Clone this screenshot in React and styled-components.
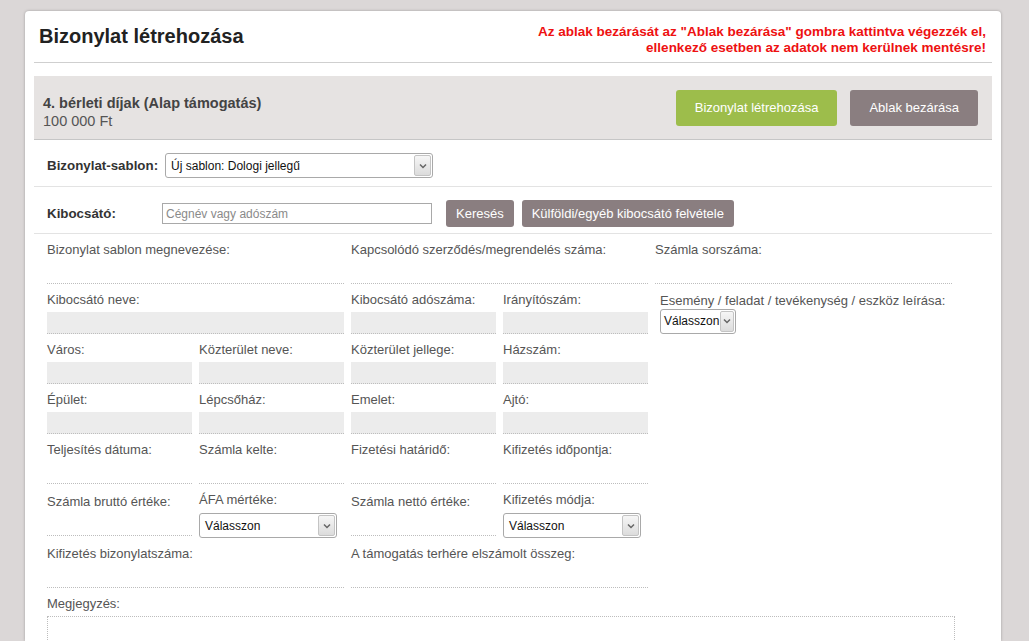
import React from 'react';
import styled, { createGlobalStyle } from 'styled-components';

const GlobalStyle = createGlobalStyle`
  html, body {
    margin: 0;
    padding: 0;
    height: 641px;
    overflow: hidden;
    background: #dbd7d7;
    font-family: "Liberation Sans", Arial, sans-serif;
  }
`;

const Modal = styled.div`
  margin: 11px 0 0 25px;
  width: 976px;
  height: 630px;
  box-sizing: border-box;
  padding: 0 9px;
  background: #fff;
  border-radius: 4px 4px 0 0;
  box-shadow: 0 0 3px rgba(0, 0, 0, 0.28);
  overflow: hidden;
`;

const Header = styled.div`
  display: flex;
  justify-content: space-between;
  align-items: flex-start;
  padding: 13px 6px 6px 5px;
  border-bottom: 1px solid #cfcfcf;
`;

const Title = styled.h1`
  margin: 0;
  font-size: 20px;
  line-height: 24px;
  font-weight: bold;
  color: #222;
`;

const Warning = styled.div`
  text-align: right;
  font-size: 13.5px;
  line-height: 16px;
  font-weight: bold;
  color: #ee1111;
`;

const Band = styled.div`
  box-sizing: border-box;
  height: 64px;
  margin-top: 13px;
  display: flex;
  justify-content: space-between;
  align-items: center;
  padding: 0 14px 0 9px;
  background: #e6e3e2;
  border-bottom: 1px solid #c6c6c6;
`;

const Info = styled.div`
  margin-top: 9px;
  font-size: 14.5px;
  line-height: 18px;
`;

const InfoName = styled.div`
  font-weight: bold;
  color: #444;
`;

const InfoAmount = styled.div`
  color: #555;
`;

const Actions = styled.div`
  display: flex;
  gap: 13px;
`;

const Button = styled.button`
  height: ${p => (p.$small ? 27 : 36)}px;
  padding: 0 ${p => (p.$small ? 10 : 19)}px;
  margin-left: ${p => p.$ml || 0}px;
  border: none;
  border-radius: 3px;
  background: ${p => (p.$green ? '#9dbd4b' : '#8a7e80')};
  color: #fff;
  font-family: "Liberation Sans", Arial, sans-serif;
  font-size: 13px;
  cursor: pointer;
  white-space: nowrap;
`;

const Row = styled.div`
  display: flex;
  align-items: center;
  padding: 13px 13px ${p => p.$pb}px;
  border-bottom: 1px solid #e3e3e3;
`;

const RowLabel = styled.div`
  width: ${p => (p.$w ? `${p.$w}px` : 'auto')};
  margin-right: ${p => (p.$w ? 0 : 7)}px;
  font-size: 13.33px;
  font-weight: bold;
  color: #333;
`;

const TextInput = styled.input`
  box-sizing: border-box;
  width: 270px;
  height: 21px;
  padding: 0 3px;
  border: 1px solid #a9a9a9;
  font-family: "Liberation Sans", Arial, sans-serif;
  font-size: 12px;
  color: #333;
  outline: none;
  &::placeholder {
    color: #8a8a8a;
  }
`;

const SelectBox = styled.div`
  box-sizing: border-box;
  display: flex;
  align-items: center;
  width: ${p => p.$w}px;
  height: 25px;
  border: 1px solid #a9a9a9;
  border-radius: 3px;
  background: #fff;
  overflow: hidden;
`;

const SelectText = styled.span`
  flex: 1;
  padding-left: ${p => p.$pl || 5}px;
  font-size: 12px;
  color: #111;
  white-space: nowrap;
`;

const ArrowBox = styled.span`
  box-sizing: border-box;
  display: flex;
  align-items: center;
  justify-content: center;
  width: 17px;
  height: calc(100% - 2px);
  margin: 1px;
  border: 1px solid #c4c4c4;
  border-radius: 2px;
  background: linear-gradient(#f6f6f6, #dcdcdc);
`;

const FormGrid = styled.div`
  display: grid;
  grid-template-columns: repeat(6, 145px);
  column-gap: 7px;
  row-gap: 7px;
  align-items: center;
  padding: 7px 13px 0;
`;

const Field = styled.div`
  grid-column: span ${p => p.$span || 1};
  padding-left: ${p => p.$indent || 0}px;
`;

const Label = styled.div`
  font-size: 13px;
  line-height: 17px;
  color: #555;
  margin-bottom: ${p => (p.$mb === undefined ? 4 : p.$mb)}px;
  white-space: nowrap;
`;

const Value = styled.div`
  height: 21px;
  background: ${p => (p.$filled ? '#ececec' : 'transparent')};
  border-bottom: 1px dotted #bdbdbd;
`;

const Notes = styled.div`
  width: 906px;
  height: 60px;
  border: 1px dotted #bdbdbd;
`;

const Chevron = () => (
  <svg width="8" height="6" viewBox="0 0 8 6">
    <path d="M1 1.5 L4 4.5 L7 1.5" fill="none" stroke="#666" strokeWidth="1.5" />
  </svg>
);

const Select = ({ value, width, pl }) => (
  <SelectBox $w={width}>
    <SelectText $pl={pl}>{value}</SelectText>
    <ArrowBox>
      <Chevron />
    </ArrowBox>
  </SelectBox>
);

const fields = [
  { label: 'Bizonylat sablon megnevezése:', span: 2 },
  { label: 'Kapcsolódó szerződés/megrendelés száma:', span: 2 },
  { label: 'Számla sorszáma:', span: 2 },
  { label: 'Kibocsátó neve:', span: 2, filled: true },
  { label: 'Kibocsátó adószáma:', filled: true },
  { label: 'Irányítószám:', filled: true },
  { label: 'Esemény / feladat / tevékenység / eszköz leírása:', span: 2, event: true },
  { label: 'Város:', filled: true },
  { label: 'Közterület neve:', filled: true },
  { label: 'Közterület jellege:', filled: true },
  { label: 'Házszám:', filled: true },
  { gap: true },
  { label: 'Épület:', filled: true },
  { label: 'Lépcsőház:', filled: true },
  { label: 'Emelet:', filled: true },
  { label: 'Ajtó:', filled: true },
  { gap: true },
  { label: 'Teljesítés dátuma:' },
  { label: 'Számla kelte:' },
  { label: 'Fizetési határidő:' },
  { label: 'Kifizetés időpontja:' },
  { gap: true },
  { label: 'Számla bruttó értéke:' },
  { label: 'ÁFA mértéke:', select: 138 },
  { label: 'Számla nettó értéke:' },
  { label: 'Kifizetés módja:', select: 138 },
  { gap: true },
  { label: 'Kifizetés bizonylatszáma:', span: 2 },
  { label: 'A támogatás terhére elszámolt összeg:', span: 2 },
  { gap: true },
];

const renderField = (f, i) => {
  if (f.gap) return <Field key={i} $span={2} />;
  if (f.event) {
    return (
      <Field key={i} $span={f.span} $indent={5}>
        <Label $mb={0}>{f.label}</Label>
        <Select value="Válasszon" width={76} pl={3} />
      </Field>
    );
  }
  if (f.select) {
    return (
      <Field key={i} $span={f.span}>
        <Label $mb={5}>{f.label}</Label>
        <Select value="Válasszon" width={f.select} />
      </Field>
    );
  }
  return (
    <Field key={i} $span={f.span}>
      <Label>{f.label}</Label>
      <Value $filled={f.filled} />
    </Field>
  );
};

export default function App() {
  return (
    <>
      <GlobalStyle />
      <Modal>
        <Header>
          <Title>Bizonylat létrehozása</Title>
          <Warning>
            Az ablak bezárását az "Ablak bezárása" gombra kattintva végezzék el,
            <br />
            ellenkező esetben az adatok nem kerülnek mentésre!
          </Warning>
        </Header>

        <Band>
          <Info>
            <InfoName>4. bérleti díjak (Alap támogatás)</InfoName>
            <InfoAmount>100 000 Ft</InfoAmount>
          </Info>
          <Actions>
            <Button $green>Bizonylat létrehozása</Button>
            <Button>Ablak bezárása</Button>
          </Actions>
        </Band>

        <Row $pb={8}>
          <RowLabel>Bizonylat-sablon:</RowLabel>
          <Select value="Új sablon: Dologi jellegű" width={268} />
        </Row>

        <Row $pb={6}>
          <RowLabel $w={115}>Kibocsátó:</RowLabel>
          <TextInput placeholder="Cégnév vagy adószám" />
          <Button $small $ml={14}>Keresés</Button>
          <Button $small $ml={8}>Külföldi/egyéb kibocsátó felvétele</Button>
        </Row>

        <FormGrid>
          {fields.map(renderField)}
          <Field $span={6}>
            <Label>Megjegyzés:</Label>
            <Notes />
          </Field>
        </FormGrid>
      </Modal>
    </>
  );
}
